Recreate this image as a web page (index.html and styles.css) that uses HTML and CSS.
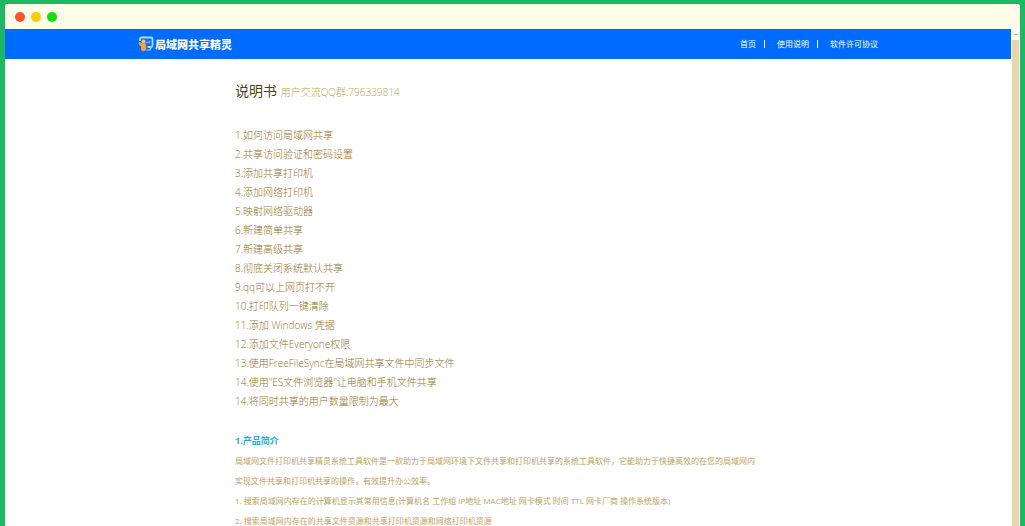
FILE: index.html
```
<!DOCTYPE html>
<html lang="zh-CN">
<head>
  <meta charset="UTF-8" />
  <meta name="viewport" content="width=device-width, initial-scale=1.0"/>
  <title>说明书 - 局域网共享精灵</title>
  <link rel="stylesheet" href="styles.css">
</head>
<body>

<div class="window">
  <div class="titlebar">
    <span class="dot red"></span>
    <span class="dot yellow"></span>
    <span class="dot green"></span>
  </div>

  <div class="viewport">
    <div class="page">
      <header class="header">
        <div class="header-inner">
          <a class="logo" href="#">
            <svg class="logo-icon" viewBox="0 0 16 16" aria-hidden="true">
              <path d="M2 5V3Q2 1.500 3.500 1.500H13Q14.500 1.500 14.500 3V9.500Q14.500 11 13 11H9.500" fill="none" stroke="#b4d9f5" stroke-width="1.800"/>
              <path d="M8.500 14H12L13.500 11" fill="none" stroke="#7fc0ff" stroke-width="1.500"/>
              <path d="M8 6.500H11.500V4.500" fill="none" stroke="#5fb0ff" stroke-width="1.300"/>
              <circle cx="5.500" cy="5.500" r="2" fill="#ffbe62"/>
              <path d="M0.500 7Q1.500 5 3 7L8 7.500V13Q8 15 6 15H5Q3 15 3 13V10Q0.500 9.500 0.500 7Z" fill="#fba32c"/>
            </svg>
            <span>局域网共享精灵</span>
          </a>
          <nav class="nav">
            <a href="#">首页</a>
            <a href="#">使用说明</a>
            <a href="#">软件许可协议</a>
          </nav>
        </div>
      </header>

      <main class="doc">
        <h1>说明书 <small>用户交流QQ群:796339814</small></h1>

        <ul class="toc">
          <li><a href="#intro">1.如何访问局域网共享</a></li>
          <li><a href="#intro">2.共享访问验证和密码设置</a></li>
          <li><a href="#intro">3.添加共享打印机</a></li>
          <li><a href="#intro">4.添加网络打印机</a></li>
          <li><a href="#intro">5.映射网络驱动器</a></li>
          <li><a href="#intro">6.新建简单共享</a></li>
          <li><a href="#intro">7.新建高级共享</a></li>
          <li><a href="#intro">8.彻底关闭系统默认共享</a></li>
          <li><a href="#intro">9.qq可以上网页打不开</a></li>
          <li><a href="#intro">10.打印队列一键清除</a></li>
          <li><a href="#intro">11.添加 Windows 凭据</a></li>
          <li><a href="#intro">12.添加文件Everyone权限</a></li>
          <li><a href="#intro">13.使用FreeFileSync在局域网共享文件中同步文件</a></li>
          <li><a href="#intro">14.使用"ES文件浏览器"让电脑和手机文件共享</a></li>
          <li><a href="#intro">14.将同时共享的用户数量限制为最大</a></li>
        </ul>

        <section class="intro" id="intro">
          <h2>1.产品简介</h2>
          <p>局域网文件打印机共享精灵系统工具软件是一款助力于局域网环境下文件共享和打印机共享的系统工具软件，它能助力于快捷高效的在您的局域网内<br>实现文件共享和打印机共享的操作，有效提升办公效率。</p>
          <p>1. 搜索局域网内存在的计算机显示其常用信息(计算机名 工作组 IP地址 MAC地址 网卡模式 时间 TTL 网卡厂商 操作系统版本)</p>
          <p>2. 搜索局域网内存在的共享文件资源和共享打印机资源和网络打印机资源</p>
        </section>
      </main>
    </div>

    <div class="scrollbar">
      <span class="scroll-arrow"></span>
      <span class="scroll-thumb"></span>
    </div>
  </div>
</div>

</body>
</html>
```
FILE: styles.css
```
* {
  box-sizing: border-box;
}

body {
  margin: 0;
  height: 100vh;
  overflow: hidden;
  padding: 4px 5px 0;
  background: #1cb864;
  font-family: "Open Sans", "Noto Sans CJK SC", sans-serif;
  color: #96701f;
}

a {
  color: inherit;
  text-decoration: none;
}

.window {
  display: flex;
  flex-direction: column;
  height: 100%;
  overflow: hidden;
  background: #fff;
  border-radius: 3px 3px 0 0;
}

.titlebar {
  display: flex;
  flex: none;
  align-items: center;
  gap: 6px;
  height: 25px;
  padding: 1px 10px 0;
  background: #fffde8;
}

.dot {
  width: 10px;
  height: 10px;
  border-radius: 50%;
}

.red {
  background: #f9562b;
}

.yellow {
  background: #fccb08;
}

.green {
  background: #12dc12;
}

.viewport {
  display: flex;
  flex: 1;
  min-height: 0;
}

.page {
  flex: 1;
  overflow: hidden;
}

/* header */
.header {
  background: #006cff;
  color: #fff;
}

.header-inner {
  display: flex;
  align-items: center;
  justify-content: space-between;
  max-width: 740px;
  height: 30px;
  margin: 0 auto;
}

.logo {
  display: flex;
  align-items: center;
  gap: 1px;
  font-size: 11px;
  font-weight: 900;
}

.logo-icon {
  width: 16px;
  height: 16px;
}

.nav {
  display: flex;
  align-items: center;
  font-size: 8px;
  line-height: 8px;
}

.nav a + a {
  margin-left: 8px;
  padding-left: 12px;
  border-left: 1px solid #fff;
}

/* document */
.doc {
  max-width: 546px;
  margin: 0 auto;
  padding-top: 20px;
}

.doc h1 {
  margin: 0 0 22px;
  font-size: 14px;
  font-weight: 400;
  line-height: 24px;
  color: #54430f;
}

.doc h1 small {
  font-size: 10px;
  font-weight: 300;
  color: #c5a252;
}

.toc {
  margin: 0 0 20px;
  padding: 0;
  list-style: none;
  font-size: 10px;
  font-weight: 300;
  line-height: 19px;
}

.intro h2 {
  margin: 0;
  font-size: 9px;
  line-height: 20px;
  color: #08b4f0;
}

.intro p {
  margin: 0;
  font-size: 8px;
  line-height: 20px;
  white-space: nowrap;
  color: #c0a060;
}

/* scrollbar */
.scrollbar {
  display: flex;
  flex-direction: column;
  align-items: center;
  width: 9px;
  padding-top: 4px;
  background: #fffdf5;
}

.scroll-arrow {
  border: 2px solid transparent;
  border-top-width: 0;
  border-bottom-color: #b5ad98;
}

.scroll-thumb {
  flex: 1;
  width: 7px;
  margin-top: 5px;
  background: #e5d6ac;
}
```
